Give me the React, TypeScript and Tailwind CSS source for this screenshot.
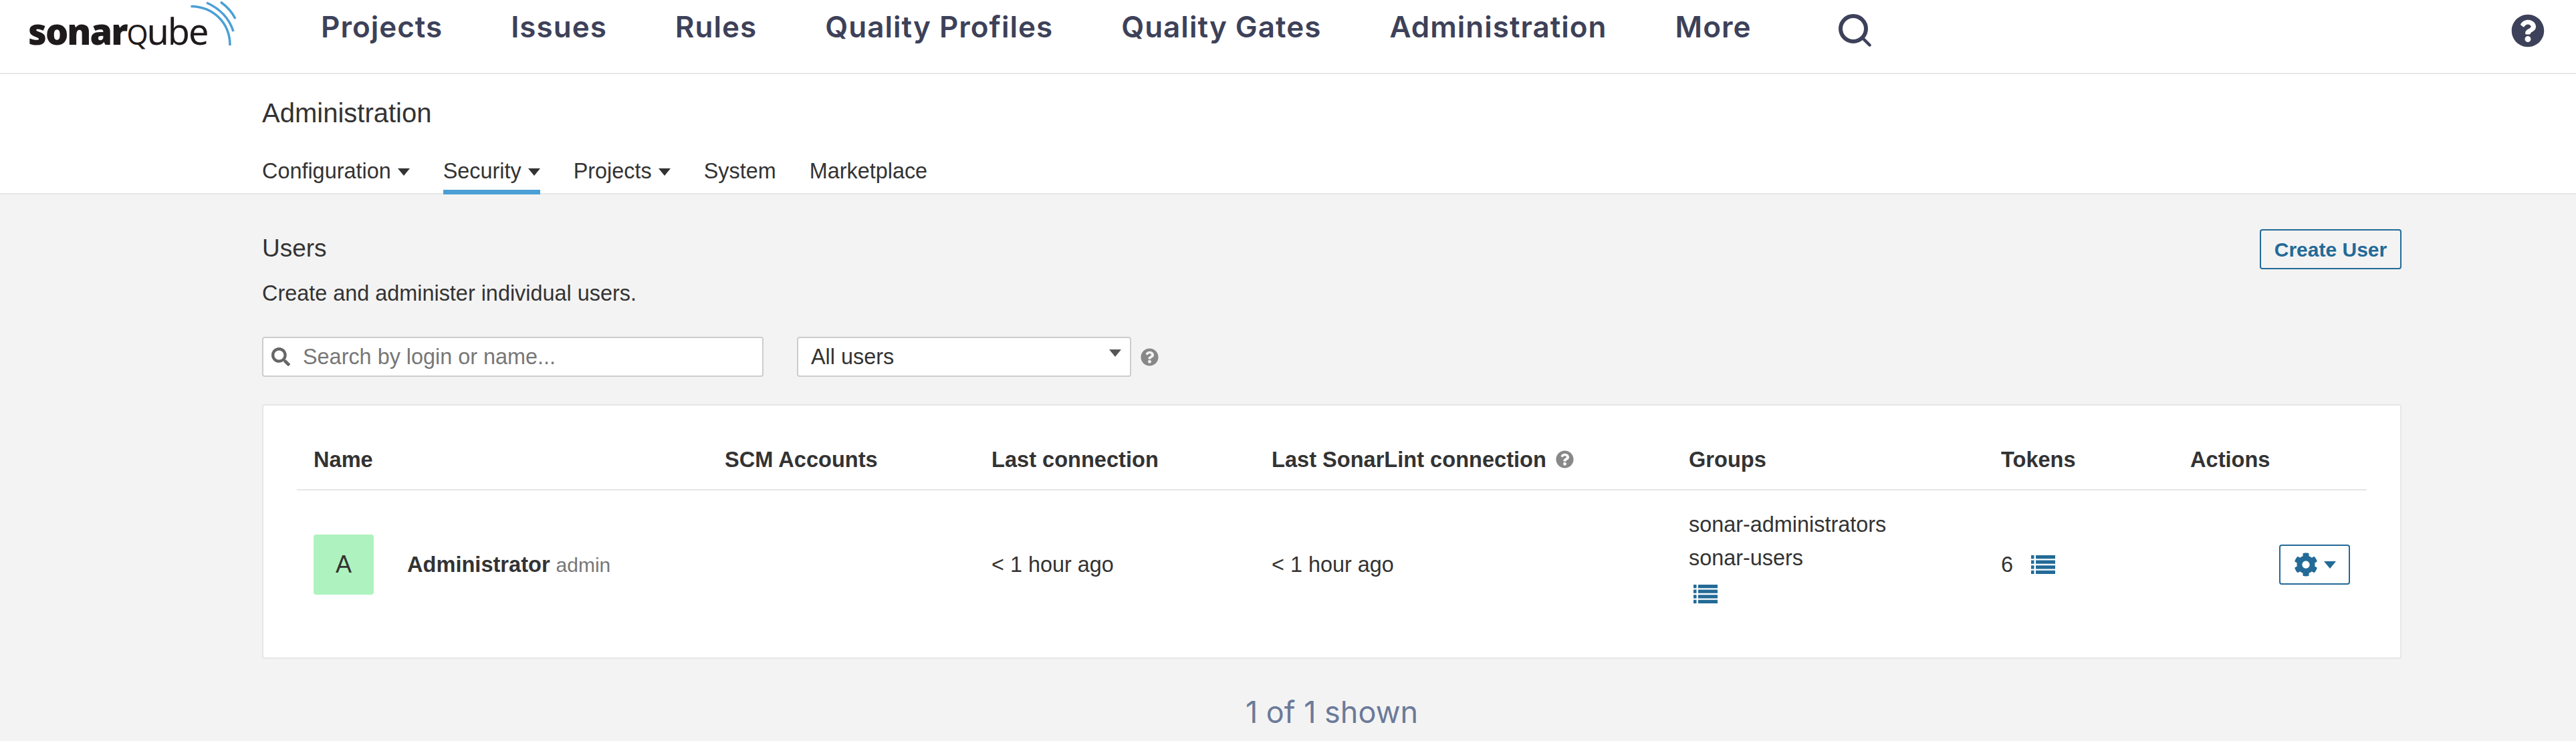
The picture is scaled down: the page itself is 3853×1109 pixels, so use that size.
import { FaCog, FaQuestionCircle, FaSearch } from "react-icons/fa";

const navItems = ["Projects", "Issues", "Rules", "Quality Profiles", "Quality Gates", "Administration", "More"];
const gridCols = "grid grid-cols-[615px_399px_419px_624px_467px_283px_290px]";

function Caret({ className = "" }: { className?: string }) {
  return (
    <svg className={className} width="18" height="11" viewBox="0 0 18 11" fill="currentColor">
      <path d="M0 0h18l-9 11z" />
    </svg>
  );
}

function ListIcon({ className = "" }: { className?: string }) {
  return (
    <svg className={className} width="36" height="28" viewBox="0 0 36 28" fill="#236a97">
      <path d="M0 0h4.500v5.200H0zM7 0h29v5.200H7zM0 7.600h4.500v5.200H0zM7 7.600h29v5.200H7zM0 15.200h4.500v5.200H0zM7 15.200h29v5.200H7zM0 22.800h4.500V28H0zM7 22.800h29V28H7z" />
    </svg>
  );
}

function Logo() {
  return (
    <div className="relative ml-[42px] w-[310px] shrink-0 pt-[16px] font-['Noto_Sans',sans-serif] text-[#1f1a1c]">
      <div className="flex items-baseline whitespace-nowrap text-[54px] leading-[60px] tracking-[-2px]">
        <span className="font-black">sonar</span>
        <span className="text-[41px] font-normal">Q</span>
        <span className="font-normal">ube</span>
      </div>
      <svg className="absolute left-[238px] top-0 text-[#4b9fd5]" width="80" height="72" viewBox="0 0 80 72" fill="none" stroke="currentColor" strokeWidth="3.500">
        <path d="M5.500 9.500C40 10 64 35 64 68" />
        <path d="M29 4C49 13 63 28 69 47" />
        <path d="M50 3C60 10 67 18 72 28" />
      </svg>
    </div>
  );
}

function TopNav() {
  return (
    <header className="flex h-[111px] items-start border-b-2 border-[#e8e8e8] bg-white">
      <Logo />
      <nav className="ml-[128px] flex gap-[102px] pt-[12px] font-['Inter',sans-serif] text-[44px] leading-[56px] font-semibold tracking-[1px] text-[#3d4159]">
        {navItems.map((item) => (
          <a key={item}>{item}</a>
        ))}
      </nav>
      <svg className="ml-[131px] mt-[21px] text-[#3d4159]" width="50" height="50" viewBox="0 0 50 50" fill="none" stroke="currentColor" strokeLinecap="round">
        <circle cx="22" cy="22" r="19" strokeWidth="6" />
        <path d="M36 36l10.500 10.500" strokeWidth="4.500" />
      </svg>
      <FaQuestionCircle className="ml-auto mr-[47px] mt-[21px] text-[#3d4159]" size={50} />
    </header>
  );
}

function SubNav() {
  const tabs = [
    { label: "Configuration", caret: true },
    { label: "Security", caret: true, active: true },
    { label: "Projects", caret: true },
    { label: "System" },
    { label: "Marketplace" },
  ];
  return (
    <div className="h-[180px] border-b-2 border-[#e6e6e6] bg-white pl-[392px] pt-[34px]">
      <h1 className="text-[40px] leading-[48px] font-normal">Administration</h1>
      <div className="mt-[43px] flex gap-[50px] text-[32.400px] leading-[40px]">
        {tabs.map((t) => (
          <a key={t.label} className={`flex h-[55px] items-start border-b-[7px] ${t.active ? "border-[#4b9fd5]" : "border-transparent"}`}>
            {t.label}
            {t.caret ? <Caret className="ml-[10px] mt-[16px]" /> : null}
          </a>
        ))}
      </div>
    </div>
  );
}

function Toolbar() {
  return (
    <div className="mt-[45px] flex items-center">
      <div className="flex h-[60px] w-[750px] items-center rounded border-2 border-[#cdcdcd] bg-white pl-[12px] text-[#777]">
        <FaSearch size={28} className="text-[#666]" />
        <span className="ml-[19px] text-[32.400px]">Search by login or name...</span>
      </div>
      <div className="ml-[50px] flex h-[60px] w-[500px] items-center justify-between rounded border-2 border-[#cdcdcd] bg-white pl-[19px] pr-[13px] text-[32.400px]">
        All users
        <Caret className="mb-[12px] text-[#555]" />
      </div>
      <FaQuestionCircle size={27} className="ml-[14px] text-[#888]" />
    </div>
  );
}

function UsersTable() {
  return (
    <div className="mt-[41px] h-[381px] rounded border-2 border-[#e6e6e6] bg-white px-[50px] text-[32.400px] leading-[40px]">
      <div className={`${gridCols} h-[127px] items-center border-b-2 border-[#e6e6e6] pt-[36px] text-[32.600px] font-bold`}>
        <div className="pl-[25px]">Name</div>
        <div className="pl-[25px]">SCM Accounts</div>
        <div className="pl-[25px]">Last connection</div>
        <div className="flex items-center pl-[25px]">
          Last SonarLint connection
          <FaQuestionCircle size={27} className="ml-[14px] text-[#888]" />
        </div>
        <div className="pl-[25px]">Groups</div>
        <div className="pl-[25px]">Tokens</div>
        <div className="pl-[25px]">Actions</div>
      </div>
      <div className={`${gridCols} h-[222px] items-center`}>
        <div className="flex items-center pl-[25px]">
          <div className="flex size-[90px] items-center justify-center rounded bg-[#aef3bf] text-[36px]">A</div>
          <div className="ml-[50px]">
            <strong className="text-[32.600px] font-bold">Administrator</strong>
            <span className="ml-[9px] text-[30px] text-[#777]">admin</span>
          </div>
        </div>
        <div />
        <div className="pl-[25px]">&lt; 1 hour ago</div>
        <div className="pl-[25px]">&lt; 1 hour ago</div>
        <div className="mb-[27px] pl-[25px]">
          <div className="leading-[50px]">sonar-administrators</div>
          <div className="leading-[50px]">sonar-users</div>
          <ListIcon className="ml-[7px] mt-[15px]" />
        </div>
        <div className="flex items-center pl-[25px]">
          6
          <ListIcon className="ml-[27px]" />
        </div>
        <div className="flex justify-end pr-[26px]">
          <button className="flex h-[60px] w-[106px] items-center justify-center gap-[9px] rounded border-2 border-[#236a97] text-[#236a97]">
            <FaCog size={36} />
            <Caret />
          </button>
        </div>
      </div>
    </div>
  );
}

export default function App() {
  return (
    <div className="h-[1109px] overflow-hidden bg-[#f3f3f3] font-['Liberation_Sans',sans-serif] text-[#333]">
      <TopNav />
      <SubNav />
      <main className="ml-[392px] w-[3200px] pt-[52px]">
        <div className="flex items-start justify-between">
          <div>
            <h2 className="mt-[9px] text-[37px] leading-[40px] font-normal">Users</h2>
            <p className="mt-[27px] text-[32.400px] leading-[40px]">Create and administer individual users.</p>
          </div>
          <button className="h-[60px] w-[212px] rounded border-2 border-[#236a97] text-[30px] font-bold text-[#236a97]">Create User</button>
        </div>
        <Toolbar />
        <UsersTable />
        <p className="mt-[50px] text-center font-['Inter',sans-serif] text-[45px] leading-[60px] text-[#6b7a99]">1 of 1 shown</p>
      </main>
    </div>
  );
}
